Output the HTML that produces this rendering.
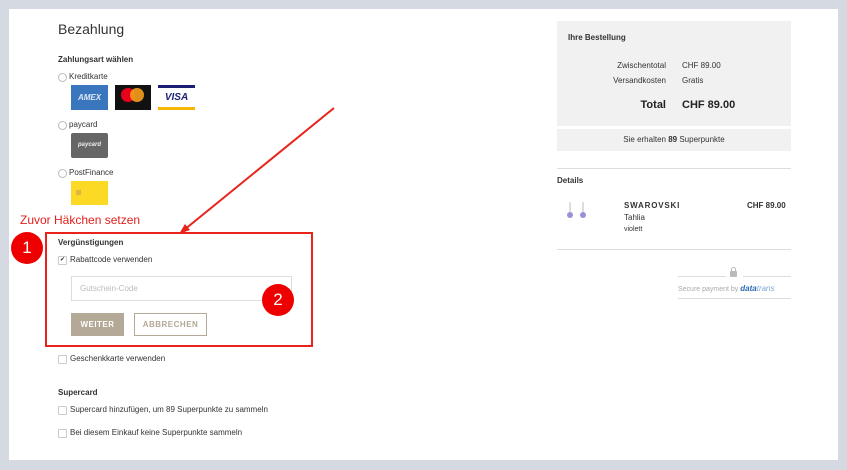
<!DOCTYPE html>
<html><head><meta charset="utf-8"><style>
body{margin:0;width:847px;height:470px;background:#d5d9e1;font-family:"Liberation Sans",sans-serif;color:#333;position:relative;overflow:hidden}
.p{position:absolute;left:9px;top:9px;width:829px;height:451px;background:#fff}
.a{position:absolute;white-space:nowrap}
.s{font-size:8px}
.b{font-weight:bold}
.r{width:7px;height:7px;border:1px solid #bbb;border-radius:50%;position:absolute}
.c{width:7px;height:7px;border:1px solid #ccc;position:absolute;border-radius:1px}
.ln{position:absolute;height:1px;background:#ddd}
</style></head><body>
<div class="p"></div>
<div class="a" style="left:58px;top:21px;font-size:14px">Bezahlung</div>
<div class="a s b" style="left:58px;top:55px">Zahlungsart wählen</div>
<div class="r" style="left:58px;top:73px"></div><div class="a s" style="left:69px;top:72px">Kreditkarte</div>
<div class="a" style="left:71px;top:85px;width:37px;height:25px;background:#3a76bd;color:#dfe9f7;font-size:8px;font-weight:bold;font-style:italic;text-align:center;line-height:25px">AMEX</div>
<div class="a" style="left:115px;top:85px;width:36px;height:25px;background:#111"><div class="a" style="left:6px;top:3px;width:14px;height:14px;border-radius:50%;background:#e9001b"></div><div class="a" style="left:15px;top:3px;width:14px;height:14px;border-radius:50%;background:#f79e1b;opacity:.9"></div></div>
<div class="a" style="left:158px;top:85px;width:37px;height:25px;background:#fff;border-top:3px solid #1a1f71;border-bottom:3px solid #f7b600;box-sizing:border-box;color:#1a1f71;font-weight:bold;font-style:italic;font-size:10px;text-align:center;line-height:19px">VISA</div>
<div class="r" style="left:58px;top:121px"></div><div class="a s" style="left:69px;top:120px">paycard</div>
<div class="a" style="left:71px;top:133px;width:37px;height:25px;background:#666;border-radius:2px;color:#eee;font-size:6px;font-style:italic;font-weight:bold;line-height:25px;text-align:center">paycard</div>
<div class="r" style="left:58px;top:169px"></div><div class="a s" style="left:69px;top:168px">PostFinance</div>
<div class="a" style="left:71px;top:181px;width:37px;height:24px;background:#fcd924"><div class="a" style="left:5px;top:9px;width:5px;height:5px;background:#e0b640"></div></div>
<div class="a" style="left:20px;top:213px;font-size:12px;color:#e0201c">Zuvor Häkchen setzen</div>
<svg class="a" style="left:0;top:0" width="847" height="470"><line x1="334" y1="108" x2="184" y2="230" stroke="#e8231c" stroke-width="2"/><polygon points="179,234 185,224 190,230" fill="#e8231c"/></svg>
<div class="a" style="left:45px;top:232px;width:264px;height:111px;border:2px solid #e8231c"></div>
<div class="a" style="left:11px;top:232px;width:32px;height:32px;border-radius:50%;background:#e00;color:#fff;font-size:17px;text-align:center;line-height:32px">1</div>
<div class="a s b" style="left:58px;top:238px">Vergünstigungen</div>
<div class="c" style="left:58px;top:256px;font-size:6px;line-height:7px;text-align:center">✔</div><div class="a s" style="left:70px;top:255px">Rabattcode verwenden</div>
<div class="a" style="left:71px;top:276px;width:219px;height:23px;border:1px solid #ddd;font-size:8px;color:#bbb;line-height:23px;text-indent:8px">Gutschein-Code</div>
<div class="a" style="left:262px;top:284px;width:32px;height:32px;border-radius:50%;background:#e00;color:#fff;font-size:17px;text-align:center;line-height:32px">2</div>
<div class="a" style="left:71px;top:313px;width:53px;height:23px;background:#b4a896;color:#fff;font-size:8px;font-weight:bold;text-align:center;line-height:23px;letter-spacing:.5px">WEITER</div>
<div class="a" style="left:134px;top:313px;width:71px;height:21px;border:1px solid #b4a896;color:#b4a896;font-size:8px;font-weight:bold;text-align:center;line-height:21px;letter-spacing:.5px">ABBRECHEN</div>
<div class="c" style="left:58px;top:355px"></div><div class="a s" style="left:70px;top:354px">Geschenkkarte verwenden</div>
<div class="a s b" style="left:58px;top:388px">Supercard</div>
<div class="c" style="left:58px;top:406px"></div><div class="a s" style="left:70px;top:405px">Supercard hinzufügen, um 89 Superpunkte zu sammeln</div>
<div class="c" style="left:58px;top:429px"></div><div class="a s" style="left:70px;top:428px">Bei diesem Einkauf keine Superpunkte sammeln</div>

<div class="a" style="left:557px;top:21px;width:234px;height:105px;background:#f1f1f1"></div>
<div class="a s b" style="left:568px;top:33px">Ihre Bestellung</div>
<div class="a s" style="left:565px;top:61px;width:101px;text-align:right">Zwischentotal</div><div class="a s" style="left:682px;top:61px">CHF 89.00</div>
<div class="a s" style="left:565px;top:76px;width:101px;text-align:right">Versandkosten</div><div class="a s" style="left:682px;top:76px">Gratis</div>
<div class="a b" style="left:565px;top:99px;width:101px;text-align:right;font-size:11px;color:#222">Total</div><div class="a b" style="left:682px;top:99px;font-size:11px;color:#222">CHF 89.00</div>
<div class="a s" style="left:557px;top:129px;width:234px;height:22px;background:#f1f1f1;text-align:center;line-height:22px">Sie erhalten <b>89</b> Superpunkte</div>
<div class="ln" style="left:557px;top:168px;width:234px"></div>
<div class="a s b" style="left:557px;top:176px">Details</div>
<svg class="a" style="left:566px;top:202px" width="24" height="20"><line x1="4" y1="0" x2="4" y2="10" stroke="#bbb"/><line x1="17" y1="0" x2="17" y2="10" stroke="#bbb"/><circle cx="4" cy="13" r="3" fill="#9b8fd6"/><circle cx="17" cy="13" r="3" fill="#9b8fd6"/></svg>
<div class="a s b" style="left:624px;top:201px;letter-spacing:.8px">SWAROVSKI</div>
<div class="a s b" style="left:747px;top:201px">CHF 89.00</div>
<div class="a s" style="left:624px;top:213px">Tahlia</div>
<div class="a" style="left:624px;top:226px;font-size:7px">violett</div>
<div class="ln" style="left:557px;top:249px;width:234px"></div>
<div class="ln" style="left:678px;top:276px;width:48px"></div><div class="ln" style="left:743px;top:276px;width:48px"></div>
<div class="a" style="left:730px;top:271px;width:7px;height:6px;background:#bbb;border-radius:1px"></div>
<div class="a" style="left:731px;top:267px;width:3px;height:4px;border:1px solid #bbb;border-bottom:none;border-radius:3px 3px 0 0"></div>
<div class="a" style="left:678px;top:284px;font-size:7px;color:#aaa">Secure payment by <b style="color:#2a6ab5;font-style:italic;font-size:8px">data</b><i style="color:#7fa6d6;font-size:8px">trans</i></div>
<div class="ln" style="left:678px;top:298px;width:113px"></div>
</body></html>
